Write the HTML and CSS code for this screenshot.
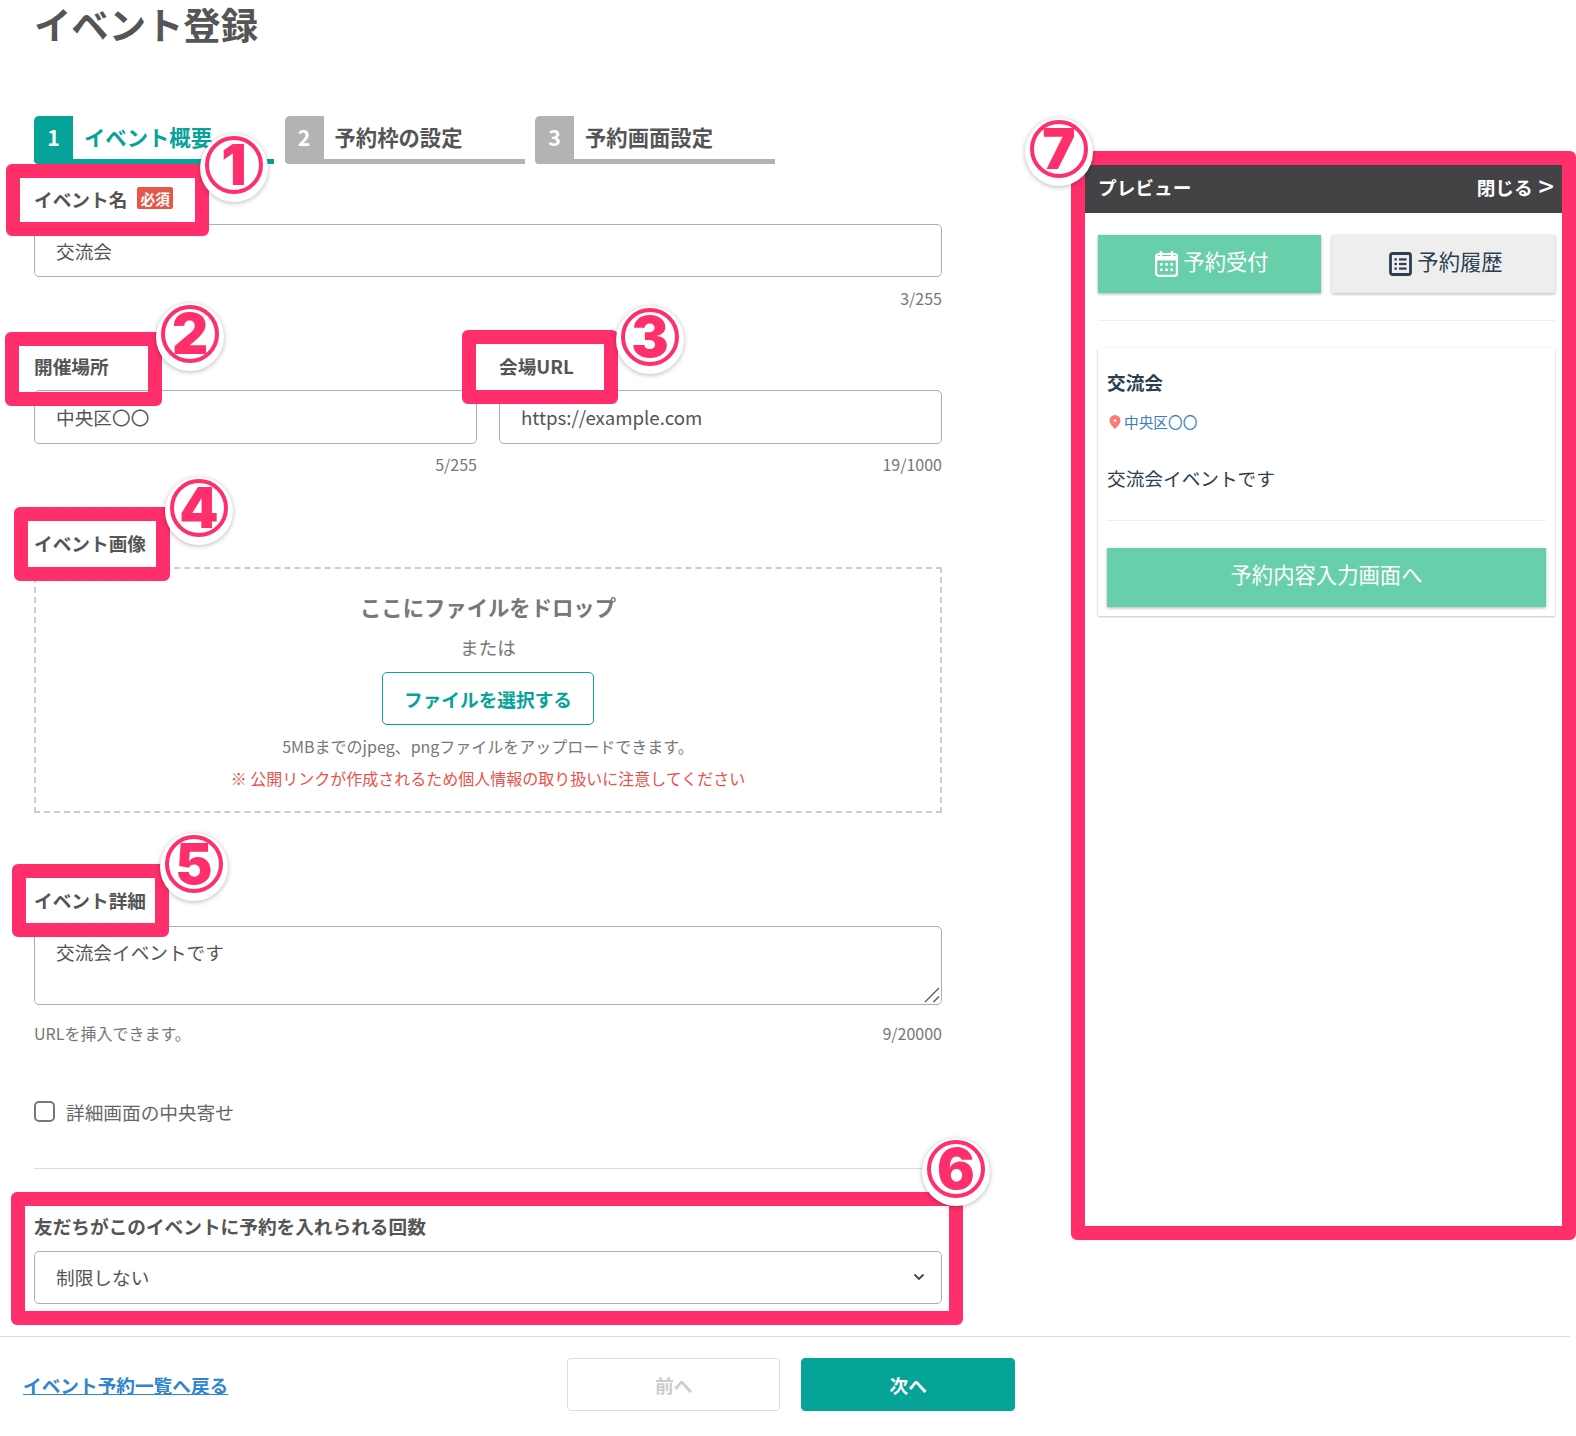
FILE: index.html
```html
<!DOCTYPE html>
<html lang="ja">
<head>
<meta charset="utf-8">
<title>イベント登録</title>
<link rel="stylesheet" href="styles.css">
</head>
<body>
<div class="page">
  <div class="layout">
    <main class="main">
      <h1 class="title">イベント登録</h1>
      <nav class="steps">
        <div class="step step-active"><span class="step-num">1</span><span class="step-text">イベント概要</span></div>
        <div class="step"><span class="step-num">2</span><span class="step-text">予約枠の設定</span></div>
        <div class="step"><span class="step-num">3</span><span class="step-text">予約画面設定</span></div>
      </nav>

      <div class="field field-name">
        <label class="label">イベント名<span class="badge">必須</span></label>
        <input class="control" type="text" value="交流会">
        <div class="meta meta-input"><span></span><span>3/255</span></div>
      </div>

      <div class="row row-place">
        <div class="field">
          <label class="label label-place">開催場所</label>
          <input class="control control-tall" type="text" value="中央区〇〇">
          <div class="meta meta-tall"><span></span><span>5/255</span></div>
        </div>
        <div class="field">
          <label class="label label-place">会場URL</label>
          <input class="control control-tall" type="text" value="https://example.com">
          <div class="meta meta-tall"><span></span><span>19/1000</span></div>
        </div>
      </div>

      <div class="field field-image">
        <label class="label label-image">イベント画像</label>
        <div class="dropzone">
          <p class="drop-title">ここにファイルをドロップ</p>
          <p class="drop-or">または</p>
          <button class="file-btn" type="button">ファイルを選択する</button>
          <p class="drop-note">5MBまでのjpeg、pngファイルをアップロードできます。</p>
          <p class="drop-warn">※ 公開リンクが作成されるため個人情報の取り扱いに注意してください</p>
        </div>
      </div>

      <div class="field field-detail">
        <label class="label label-detail">イベント詳細</label>
        <div class="area-wrap">
          <textarea class="control control-area">交流会イベントです</textarea>
          <svg class="resizer" width="16" height="16" viewBox="0 0 16 16"><path d="M1 15 15 1M9.500 15 15 9.500" fill="none" stroke="#555" stroke-width="1.300"/></svg>
        </div>
        <div class="meta meta-area"><span>URLを挿入できます。</span><span>9/20000</span></div>
      </div>

      <div class="check-row">
        <span class="check-box"></span>
        <span class="check-text">詳細画面の中央寄せ</span>
      </div>

      <hr class="rule">

      <div class="field field-limit">
        <label class="label">友だちがこのイベントに予約を入れられる回数</label>
        <div class="select-wrap">
          <select class="control control-select"><option>制限しない</option></select>
          <svg class="chevron" width="12" height="8" viewBox="0 0 12 8"><path d="M1.500 1.500 6 6l4.500-4.500" fill="none" stroke="#444" stroke-width="1.800"/></svg>
        </div>
      </div>
    </main>

    <aside class="preview">
      <header class="preview-head"><span>プレビュー</span><span class="preview-close">閉じる<span class="preview-gt">&gt;</span></span></header>
      <div class="preview-body">
        <div class="preview-tabs">
          <div class="ptab ptab-on">
            <svg class="ptab-icon" width="23" height="27" viewBox="0 0 23 27">
              <rect x="1.100" y="4" width="20.800" height="21.800" rx="2.500" fill="none" stroke="#fff" stroke-width="2.200"/>
              <path d="M1.500 6h20v4.500h-20z" fill="#fff"/>
              <path d="M6 1v5M17 1v5" stroke="#fff" stroke-width="2.400"/>
              <g fill="#fff"><rect x="5" y="13" width="2.600" height="2.600"/><rect x="10.200" y="13" width="2.600" height="2.600"/><rect x="15.400" y="13" width="2.600" height="2.600"/><rect x="5" y="18.500" width="2.600" height="2.600"/><rect x="10.200" y="18.500" width="2.600" height="2.600"/><rect x="15.400" y="18.500" width="2.600" height="2.600"/></g>
            </svg>
            <span>予約受付</span>
          </div>
          <div class="ptab ptab-off">
            <svg class="ptab-icon" width="23" height="24" viewBox="0 0 23 24">
              <rect x="1.500" y="1.500" width="20" height="21" rx="2" fill="none" stroke="#2c3e50" stroke-width="2.800"/>
              <g fill="#2c3e50"><rect x="5.500" y="6.300" width="2.400" height="2.200"/><rect x="5.500" y="10.900" width="2.400" height="2.200"/><rect x="5.500" y="15.500" width="2.400" height="2.200"/><rect x="10" y="6.300" width="7.500" height="2.200"/><rect x="10" y="10.900" width="7.500" height="2.200"/><rect x="10" y="15.500" width="7.500" height="2.200"/></g>
            </svg>
            <span>予約履歴</span>
          </div>
        </div>
        <div class="preview-rule"></div>
        <section class="card">
          <h2 class="card-title">交流会</h2>
          <div class="card-place">
            <svg width="12" height="14" viewBox="0 0 12 14"><path d="M6 0a5.500 5.500 0 0 1 5.500 5.500C11.500 9 8 12 6 14 4 12 .5 9 .5 5.500A5.500 5.500 0 0 1 6 0z" fill="#fb7a72"/><circle cx="6" cy="5.500" r="1.300" fill="#fff"/></svg>
            <span>中央区〇〇</span>
          </div>
          <p class="card-desc">交流会イベントです</p>
          <div class="card-rule"></div>
          <div class="card-btn">予約内容入力画面へ</div>
        </section>
      </div>
    </aside>
  </div>

  <footer class="footer">
    <a class="back-link" href="#">イベント予約一覧へ戻る</a>
    <div class="footer-btns">
      <button class="nav-btn nav-prev" type="button">前へ</button>
      <button class="nav-btn nav-next" type="button">次へ</button>
    </div>
  </footer>

  <div class="box box-1"></div>
  <div class="box box-2"></div>
  <div class="box box-3"></div>
  <div class="box box-4"></div>
  <div class="box box-5"></div>
  <div class="box box-6"></div>
  <div class="box box-7"></div>

  <div class="pin pin-1">1</div>
  <div class="pin pin-2">2</div>
  <div class="pin pin-3">3</div>
  <div class="pin pin-4">4</div>
  <div class="pin pin-5">5</div>
  <div class="pin pin-6">6</div>
  <div class="pin pin-7">7</div>
</div>
</body>
</html>
```
FILE: styles.css
```css
* { box-sizing: border-box; }
html, body { margin: 0; padding: 0; background: #fff; }
body {
  font-family: "Noto Sans CJK JP", "Noto Sans", sans-serif;
  color: #555;
  font-size: 18.67px;
}
.page { position: relative; width: 1576px; height: 1436px; overflow: hidden; }
.layout { display: flex; height: 1336px; }
.main { margin-left: 34px; width: 908px; }

.title { margin: 0; font-size: 37.33px; line-height: 48px; font-weight: 700; color: #555; }

.steps { display: flex; gap: 10.5px; margin-top: 68px; }
.step {
  position: relative; display: flex; align-items: flex-start; width: 240px; height: 48px;
  box-shadow: inset 0 -5px 0 #b3b3b3; border-radius: 4px 0 0 4px;
}
.step-num {
  display: flex; align-items: center; justify-content: center;
  width: 39px; height: 48px; padding-bottom: 8px; background: #b3b3b3; color: #fff;
  font-weight: 700; font-size: 21.33px; border-radius: 5px 0 0 5px;
}
.step-text { margin: 10px 0 0 11px; font-size: 21.33px; font-weight: 700; color: #555; line-height: 21px; }
.step-active { box-shadow: inset 0 -5px 0 #06a398; }
.step-active .step-num { background: #06a398; }
.step-active .step-text { color: #06a398; }

.field { display: flex; flex-direction: column; }
.label { display: flex; align-items: center; height: 28px; margin-bottom: 12px; font-weight: 700; font-size: 18.67px; color: #555; }
.label-place { margin-bottom: 11px; }
.label-image { margin-bottom: 11px; }
.label-detail { margin-bottom: 13px; }
.badge {
  display: inline-flex; align-items: center; justify-content: center;
  width: 36px; height: 22px; margin-left: 10px; background: #e5574a; color: #fff;
  font-size: 14.67px; font-weight: 700; border-radius: 2px;
}
.control {
  display: block; width: 100%; height: 53px; padding: 0 21px; margin: 0;
  border: 1px solid #aeaeae; border-radius: 5px; background: #fff;
  font: 400 18.67px "Noto Sans CJK JP", "Noto Sans", sans-serif; color: #555; outline: none;
}
.control-tall { height: 54px; padding-bottom: 2px; }
.meta { display: flex; justify-content: space-between; height: 22px; line-height: 22px; font-size: 16px; color: #777; }
.meta-input { margin-top: 10px; }
.meta-tall { margin-top: 9px; }
.meta-area { margin-top: 17px; }

.field-name { margin-top: 20px; }
.row-place { display: grid; grid-template-columns: 443px 443px; gap: 22px; margin-top: 42px; }
.field-image { margin-top: 53px; }
.dropzone {
  display: flex; flex-direction: column; align-items: center; height: 246px; padding-top: 22px;
  border: 2px dashed #ccc; color: #777;
}
.dropzone p { margin: 0; }
.dropzone .drop-title { font-size: 21.33px; font-weight: 700; line-height: 32px; }
.dropzone .drop-or { margin-top: 10px; font-size: 18.67px; line-height: 28px; }
.file-btn {
  width: 212px; height: 53px; margin-top: 11px; background: #fff; border: 1px solid #06a398; border-radius: 5px;
  color: #06a398; font: 700 18.67px "Noto Sans CJK JP", sans-serif; padding: 0;
}
.dropzone .drop-note { margin-top: 9px; font-size: 16px; line-height: 24px; color: #777; }
.dropzone .drop-warn { margin-top: 8px; font-size: 16px; line-height: 24px; color: #e9524a; }

.field-detail { margin-top: 72px; }
.area-wrap { position: relative; }
.control-area { height: 79px; padding: 11px 21px; line-height: 28px; resize: none; }
.resizer { position: absolute; right: 2px; bottom: 2px; }

.check-row { display: flex; align-items: center; gap: 11px; margin-top: 57px; height: 20px; }
.check-box { width: 21px; height: 21px; border: 2px solid #777; border-radius: 5px; }
.check-text { font-size: 18.67px; color: #666; line-height: 1; margin-top: 2px; }

.rule { height: 1px; margin: 47px 0 0; border: 0; background: #ddd; }
.field-limit { margin-top: 42px; }
.select-wrap { position: relative; }
.control-select { appearance: none; -webkit-appearance: none; padding-bottom: 3px; }
.chevron { position: absolute; right: 17px; top: 22px; }

.preview { width: 477px; height: 1061px; margin: 165px 0 0 143px; display: flex; flex-direction: column; }
.preview-head {
  display: flex; justify-content: space-between; align-items: center; height: 48px; padding: 0 8px 6px 13px;
  background: #434345; color: #fff; font-weight: 700; font-size: 18.67px;
}
.preview-close { display: flex; align-items: center; gap: 6px; }
.preview-gt { font-size: 27px; font-weight: 500; line-height: 1; margin-top: -1px; }
.preview-body { padding: 22px 7px 0 13px; color: #2c3e50; }
.preview-tabs { display: flex; gap: 11px; }
.ptab {
  display: flex; align-items: center; justify-content: center; gap: 5px; flex: 1; height: 58px; padding: 0 0 7px 5px;
  font-size: 21.33px; box-shadow: 0 1px 3px rgba(0,0,0,.3);
}
.ptab-icon { margin-top: 6px; }
.ptab-on { background: #68cfab; color: #fff; }
.ptab-off { background: #eee; color: #2c3e50; }
.preview-rule { height: 1px; margin-top: 27px; background: #eee; }
.card { height: 268px; margin-top: 27px; padding: 19px 9px 0; box-shadow: 0 1px 2px rgba(0,0,0,.2), 0 0 2px rgba(0,0,0,.08); }
.card-title { margin: 0; font-size: 18.67px; font-weight: 700; line-height: 30px; color: #2c3e50; }
.card-place { display: flex; align-items: center; gap: 3px; margin-top: 15px; margin-left: 2px; font-size: 14.67px; line-height: 20px; color: #3a7cc0; }
.card-desc { margin: 32px 0 0; font-size: 18.67px; line-height: 28px; color: #2c3e50; }
.card-rule { height: 1px; margin-top: 28px; background: #eee; }
.card-btn {
  display: flex; align-items: center; justify-content: center; height: 59px; margin-top: 27px; padding-bottom: 8px;
  background: #68cfab; color: #fff; font-size: 21.33px; box-shadow: 0 1px 3px rgba(0,0,0,.3);
}

.footer { position: relative; display: flex; align-items: center; width: 1570px; height: 100px; border-top: 1px solid #ddd; padding: 0 0 4px 23px; }
.back-link { color: #2f85d0; font-weight: 700; font-size: 18.67px; text-decoration: underline; }
.footer-btns { display: flex; gap: 21px; margin-left: 339px; }
.nav-btn { width: 213px; height: 53px; padding: 0; border-radius: 4px; font: 700 18.67px "Noto Sans CJK JP", sans-serif; }
.nav-prev { background: #fff; border: 1px solid #ddd; color: #ccc; }
.nav-next { width: 214px; background: #06a398; border: 1px solid #06a398; color: #fff; }

.box { position: absolute; border: 14px solid #ff2f6b; border-radius: 6px; pointer-events: none; }
.box-1 { left: 6px; top: 164px; width: 203px; height: 72px; }
.box-2 { left: 5px; top: 332px; width: 157px; height: 74px; }
.box-3 { left: 462px; top: 330px; width: 156px; height: 74px; }
.box-4 { left: 14px; top: 507px; width: 156px; height: 74px; }
.box-5 { left: 12px; top: 864px; width: 157px; height: 73px; }
.box-6 { left: 11px; top: 1192px; width: 952px; height: 133px; }
.box-7 { left: 1071px; top: 151px; width: 505px; height: 1089px; }

.pin {
  position: absolute; width: 58px; height: 58px; border-radius: 50%;
  display: flex; align-items: center; justify-content: center;
  background: #fff; border: 4px solid #ff2f6b; color: #ff2f6b;
  font-family: Inter, Roboto, sans-serif; font-weight: 900; font-size: 56px; line-height: 1;
  box-shadow: 0 3px 0 5px #fff, 0 4px 5px 5px rgba(0,0,0,.28);
}
.pin-1 { left: 205px; top: 136px; }
.pin-2 { left: 161px; top: 305px; }
.pin-3 { left: 621px; top: 308px; }
.pin-4 { left: 170px; top: 479px; }
.pin-5 { left: 165px; top: 835px; }
.pin-6 { left: 927px; top: 1140px; }
.pin-7 { left: 1030px; top: 120px; }
```
